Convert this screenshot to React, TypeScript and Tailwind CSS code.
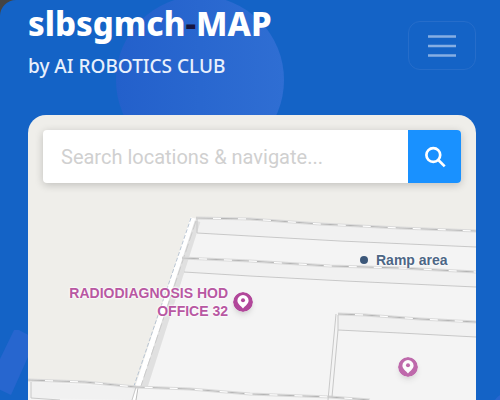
import { useState } from 'react';

const wallLines = [
  'M196 218 L250 219 L320 224 L400 228 L476 231',
  'M182 258 L250 261 L330 266 L400 268 L476 272',
  'M28 380 L85 382 L136 387 L190 389 L250 394 L330 397 L370 400',
  'M338 314 L365 315 L420 319 L476 322',
];

const innerLines = [
  'M197 219 L197 233 L250 236 L340 241 L476 247',
  'M184 272 L250 276 L345 281 L476 287',
  'M338 315 L338 330 L400 333 L476 337',
  'M336 314 L328 400',
  'M338 330 L332 397',
  'M136 387 L132 400',
  'M31 382 L31 398 L60 400',
];

function MapPin() {
  return (
    <svg viewBox="0 0 20 20" className="h-5 w-5 rounded-full shadow-md" aria-hidden="true">
      <circle cx="10" cy="10" r="10" fill="#b1479a" />
      <path d="M10 3a5.6 5.6 0 0 0-5.6 5.6c0 3.5 3.4 5.2 5.6 8 2.200-2.800 5.600-4.500 5.600-8A5.600 5.600 0 0 0 10 3z" fill="#fff" />
      <circle cx="10" cy="8.300" r="2" fill="#b1479a" />
    </svg>
  );
}

function FloorPlan() {
  return (
    <svg
      viewBox="28 115 448 285"
      preserveAspectRatio="xMinYMin slice"
      className="absolute inset-0 h-full w-full"
      fill="none"
      aria-hidden="true"
    >
      {/* Rooms */}
      <path d="M193 218 L476 231 L476 400 L28 400 L28 380 L136 387 Z" fill="#f4f4f4" />
      <path d="M197 219 L476 232 L476 247 L197 233 Z" fill="#f1f1f1" />
      <path d="M183 258 L476 272 L476 287 L184 272 Z" fill="#f1f1f1" />
      <path d="M338 315 L476 322 L476 337 L338 330 Z" fill="#f1f1f1" />
      <path d="M31 382 L136 388 L132 400 L31 398 Z" fill="#f1f1f1" />

      {/* Outer wall */}
      <path d="M197 221 L144 387" stroke="#e0e0e0" strokeWidth="7" />
      <path d="M193 218 L138 386" stroke="#fff" strokeWidth="5" />
      <path d="M191 218 L134 386" stroke="#b9c5d3" strokeDasharray="4 2" />
      <path d="M196 221 L141 386" stroke="#cccccc" strokeDasharray="9 3" />
      <path d="M138 388 L134 400" stroke="#fff" strokeWidth="3" />
      <path d="M138 388 L136 400" stroke="#bbb" />

      {wallLines.map((d) => (
        <g key={d}>
          <path d={d} stroke="#dadada" strokeWidth="3" />
          <path d={d} stroke="#fff" />
          <path d={d} stroke="#b4b4b4" strokeDasharray="17 8" />
        </g>
      ))}
      {innerLines.map((d) => (
        <path key={d} d={d} stroke="#c8c8c8" />
      ))}
    </svg>
  );
}

export default function App() {
  const [query, setQuery] = useState('');
  const labelHalo = '[text-shadow:0_0_2px_#fff,0_0_2px_#fff,0_0_3px_#fff]';

  return (
    <div className="h-screen bg-[#444444] font-['Noto_Sans',sans-serif]">
      <div className="relative flex h-full flex-col overflow-hidden rounded-tl-2xl bg-[#1463c6] pr-6 pl-7">
        {/* Background shapes */}
        <div className="absolute -top-1 left-29 h-42 w-42 rounded-full bg-linear-to-r from-[#2360cb] to-[#2f6ed3]" />
        <svg viewBox="0 0 30 70" className="absolute bottom-0 left-0 h-[70px] w-[30px]" aria-hidden="true">
          <path d="M15 -2 L36 9 L11 65 L-12 54 Z" fill="#2766cf" />
        </svg>
        <div className="absolute -right-7 -bottom-7 h-9 w-9 rounded-full bg-[#2766cf]" />

        <header className="relative flex h-[115px] shrink-0 items-start justify-between text-white">
          <div className="pt-1">
            <h1 className="text-[33px] leading-10 font-extrabold whitespace-nowrap">
              slbsgmch<span className="text-[#17163f]">-</span>MAP
            </h1>
            <p className="mt-2 text-[19px] leading-7 font-medium whitespace-nowrap text-[#e8f0fc]">by AI ROBOTICS CLUB</p>
          </div>
          <button
            type="button"
            aria-label="Open menu"
            className="mt-[21px] flex h-[49px] w-[68px] shrink-0 items-center justify-center rounded-xl border border-[#266dca]"
          >
            <svg viewBox="0 0 30 24" className="h-6 w-[30px]" stroke="#85aee3" strokeWidth="2.4" aria-hidden="true">
              <path d="M1 2.5h28M1 12h28M1 21.5h28" />
            </svg>
          </button>
        </header>

        <main className="relative flex-1 overflow-hidden rounded-t-[18px] bg-[#efeeea] p-[15px]">
          <FloorPlan />

          <form
            role="search"
            onSubmit={(e) => e.preventDefault()}
            className="relative flex h-[53px] overflow-hidden rounded-sm bg-white shadow-[0_2px_8px_rgba(0,0,0,0.2)]"
          >
            <input
              type="text"
              aria-label="Search locations"
              placeholder="Search locations & navigate..."
              value={query}
              onChange={(e) => setQuery(e.target.value)}
              className="min-w-0 flex-1 px-[18px] font-[Roboto,sans-serif] text-xl text-gray-700 outline-none placeholder:text-[#d0d0d0]"
            />
            <button type="submit" aria-label="Search" className="flex w-[53px] items-center justify-center bg-[#1991ff]">
              <svg viewBox="0 0 22 22" className="h-[22px] w-[22px]" fill="none" stroke="#fff" strokeWidth="2.7" aria-hidden="true">
                <circle cx="9.3" cy="9" r="6.9" />
                <path d="M14.1 13.8 L20.7 20.4" />
              </svg>
            </button>
          </form>

          {/* Places */}
          <div className={`absolute top-[169px] left-9 flex items-center gap-1 font-['Liberation_Sans',sans-serif] ${labelHalo}`}>
            <span className="w-[165px] pr-px text-right text-sm leading-[18px] font-bold whitespace-nowrap text-[#b858a2]">
              RADIODIAGNOSIS HOD
              <br />
              OFFICE 32
            </span>
            <MapPin />
          </div>
          <div className={`absolute top-[136px] left-[332px] flex items-center gap-2 font-['Liberation_Sans',sans-serif] ${labelHalo}`}>
            <span className="h-2 w-2 rounded-full bg-[#3b5779]" />
            <span className="text-sm leading-[18px] font-bold whitespace-nowrap text-[#4d6685]">Ramp area</span>
          </div>
          <div className="absolute top-[242px] left-[370px] opacity-80">
            <MapPin />
          </div>
        </main>
      </div>
    </div>
  );
}
